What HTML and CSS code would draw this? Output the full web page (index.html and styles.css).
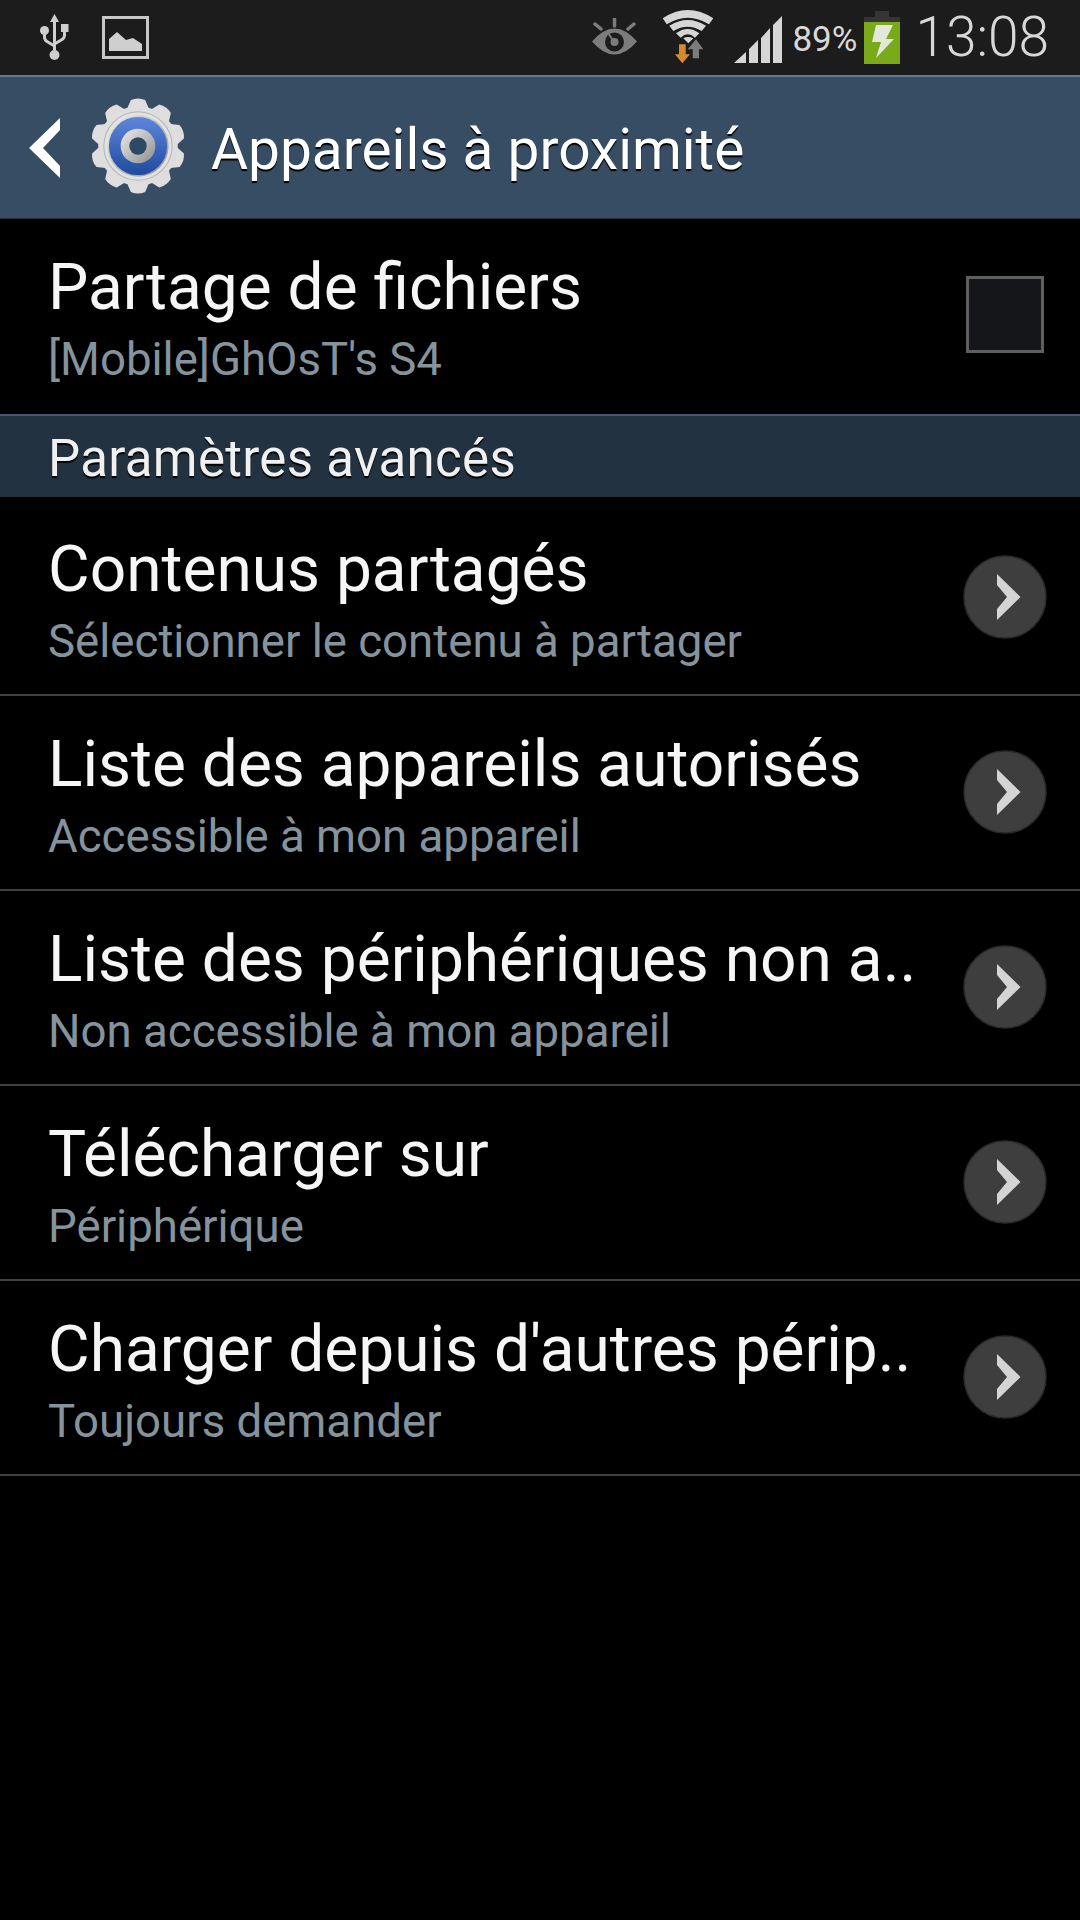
FILE: index.html
```html
<!DOCTYPE html>
<html lang="fr">
<head>
  <meta charset="UTF-8" />
  <meta name="viewport" content="width=device-width, initial-scale=1.0" />
  <title>Appareils à proximité</title>
  <link rel="stylesheet" href="styles.css">
</head>
<body>
  <div class="status-bar">
    <div class="status-left">
      <svg class="icon-usb" width="29" height="47" viewBox="0 0 29 47">
        <path d="M14.5 0 L19 8 H16 V36 H13 V8 H10 Z" fill="#cfcfcf"/>
        <circle cx="14.5" cy="41" r="5" fill="#cfcfcf"/>
        <circle cx="4.5" cy="16.5" r="4.5" fill="#cfcfcf"/>
        <rect x="21" y="10" width="7.5" height="8" fill="#cfcfcf"/>
        <path d="M4.5 18 V23 Q4.5 26 7 27.5 L14.5 32" fill="none" stroke="#cfcfcf" stroke-width="3"/>
        <path d="M24.5 17 V21 Q24.5 24 22 25.5 L14.5 30" fill="none" stroke="#cfcfcf" stroke-width="3"/>
      </svg>
      <svg class="icon-image" width="47" height="43" viewBox="0 0 47 43">
        <rect x="1.5" y="1.5" width="44" height="40" fill="none" stroke="#c8c8c8" stroke-width="3"/>
        <path d="M7 35 V23 L15 16 L24 24 L31 22 L40 28 V35 Z" fill="#cfcfcf"/>
      </svg>
    </div>
    <div class="status-right">
      <svg class="icon-eye" width="45" height="37" viewBox="0 0 45 37">
        <path d="M0 23.5 Q22.5 -2.5 45 23.5 Q22.5 49.5 0 23.5 Z" fill="#7c7c7c"/>
        <circle cx="22.5" cy="24" r="9.5" fill="#1c1c1c"/>
        <circle cx="22.5" cy="24" r="4" fill="#7c7c7c"/>
        <path d="M22 24 L16 15" stroke="#7c7c7c" stroke-width="2"/>
        <path d="M22.5 1 V8 M3 6 L9 11 M42 6 L36 11" stroke="#7c7c7c" stroke-width="3.5" stroke-linecap="round"/>
      </svg>
      <svg class="icon-wifi" width="52" height="54" viewBox="0 0 52 54">
        <path d="M0.7 8.3 Q25.7 -8.300 51.300 8.3 L47 14.300 Q25.700 1.100 4.700 14.300 Z" fill="#d6d6d6"/>
        <path d="M7.300 15.700 Q25.700 4.300 44 15.700 L39.700 21 Q25.700 12.400 11.300 21 Z" fill="#d6d6d6"/>
        <path d="M14 23.300 Q25.700 14.700 37.300 23.300 L33 27.700 Q25.700 20.900 18.700 27.700 Z" fill="#d6d6d6"/>
        <path d="M21.300 28.300 Q25.700 25.500 31.300 28.300 L26.300 33.300 Z" fill="#d6d6d6"/>
        <path d="M34 29.300 L41.300 39.300 H37 V48.300 H30.700 V39.300 H25.700 Z" fill="#7c7c7c"/>
        <path d="M17 34.300 H23.700 V44.300 H28 L20.300 53.300 L13 44.300 H17 Z" fill="#d68a2e"/>
      </svg>
      <svg class="icon-signal" width="48" height="47" viewBox="0 0 48 47">
        <path d="M0 47 L12 36 V47 Z M15 33 L24 24 V47 H15 Z M27 22 L36 12 V47 H27 Z M39 9 L48 0 V47 H39 Z" fill="#d6d6d6"/>
      </svg>
      <span class="battery-text">89%</span>
      <svg class="icon-battery" width="36" height="53" viewBox="0 0 36 53">
        <rect x="11" y="0" width="14" height="7" fill="#353535"/>
        <rect x="0" y="6" width="36" height="5" fill="#353535"/>
        <rect x="0" y="11" width="36" height="42" fill="#7aa91a"/>
        <path d="M12 14 H29 L22 28 H30 L12 47 L17 31 H8 Z" fill="#e4e8d8"/>
      </svg>
      <span class="clock">13:08</span>
    </div>
  </div>

  <div class="action-bar">
    <svg class="back-arrow" width="31" height="60" viewBox="0 0 31 60">
      <path d="M31 0 V12 L14 30 L31 48 V60 L0 30 Z" fill="#fff"/>
    </svg>
    <svg class="gear" width="96" height="96" viewBox="0 0 94 94">
      <defs>
        <linearGradient id="blue" x1="0" y1="0" x2="0" y2="1">
          <stop offset="0" stop-color="#5f86dc"/>
          <stop offset="1" stop-color="#1f4a9e"/>
        </linearGradient>
        <linearGradient id="silver" x1="0" y1="0" x2="1" y2="1">
          <stop offset="0" stop-color="#ececec"/>
          <stop offset="1" stop-color="#8e8e8e"/>
        </linearGradient>
        <path id="tooth" d="M36.500 10 L40 2 Q47 -1 54 2 L57.500 10 Z" fill="#dedede"/>
      </defs>
      <use href="#tooth"/>
      <use href="#tooth" transform="rotate(36 47 47)"/>
      <use href="#tooth" transform="rotate(72 47 47)"/>
      <use href="#tooth" transform="rotate(108 47 47)"/>
      <use href="#tooth" transform="rotate(144 47 47)"/>
      <use href="#tooth" transform="rotate(180 47 47)"/>
      <use href="#tooth" transform="rotate(216 47 47)"/>
      <use href="#tooth" transform="rotate(252 47 47)"/>
      <use href="#tooth" transform="rotate(288 47 47)"/>
      <use href="#tooth" transform="rotate(324 47 47)"/>
      <circle cx="47" cy="47" r="39" fill="#dedede"/>
      <circle cx="47" cy="47" r="34" fill="#b4b4b4"/>
      <circle cx="47" cy="47" r="33" fill="#e2e2e2"/>
      <circle cx="47" cy="47" r="30" fill="url(#silver)"/>
      <circle cx="47" cy="47" r="28.500" fill="url(#blue)"/>
      <circle cx="47" cy="47" r="17" fill="url(#silver)"/>
      <circle cx="47" cy="47" r="8.500" fill="#2e4a63"/>
    </svg>
    <h1 class="screen-title">Appareils à proximité</h1>
  </div>

  <div class="list">
    <div class="row row-toggle">
      <div class="row-text">
        <div class="row-title">Partage de fichiers</div>
        <div class="row-sub">[Mobile]GhOsT's S4</div>
      </div>
      <div class="checkbox"></div>
    </div>
    <div class="section-header">Paramètres avancés</div>
    <div class="row">
      <div class="row-text">
        <div class="row-title">Contenus partagés</div>
        <div class="row-sub">Sélectionner le contenu à partager</div>
      </div>
      <svg class="go" width="84" height="84" viewBox="0 0 84 84"><use href="#go-btn"/></svg>
    </div>
    <div class="row">
      <div class="row-text">
        <div class="row-title">Liste des appareils autorisés</div>
        <div class="row-sub">Accessible à mon appareil</div>
      </div>
      <svg class="go" width="84" height="84" viewBox="0 0 84 84"><use href="#go-btn"/></svg>
    </div>
    <div class="row">
      <div class="row-text">
        <div class="row-title">Liste des périphériques non a..</div>
        <div class="row-sub">Non accessible à mon appareil</div>
      </div>
      <svg class="go" width="84" height="84" viewBox="0 0 84 84"><use href="#go-btn"/></svg>
    </div>
    <div class="row">
      <div class="row-text">
        <div class="row-title">Télécharger sur</div>
        <div class="row-sub">Périphérique</div>
      </div>
      <svg class="go" width="84" height="84" viewBox="0 0 84 84"><use href="#go-btn"/></svg>
    </div>
    <div class="row">
      <div class="row-text">
        <div class="row-title">Charger depuis d'autres périp..</div>
        <div class="row-sub">Toujours demander</div>
      </div>
      <svg class="go" width="84" height="84" viewBox="0 0 84 84"><use href="#go-btn"/></svg>
    </div>
  </div>

  <svg class="sprites" width="0" height="0">
    <g id="go-btn">
      <circle cx="42" cy="42" r="41" fill="#3e3e3e" stroke="#2a2a2a" stroke-width="1.500"/>
      <path d="M34 19 L57.500 42 L34 65 V54 L44 42 L34 30 Z" fill="#d4d4d4"/>
    </g>
  </svg>
</body>
</html>
```

FILE: styles.css
```css
body {
  font-family: Roboto, "Liberation Sans", sans-serif;
  background: #000;
  color: #fff;
  margin: 0;
  padding: 0;
}
.status-bar {
  height: 75px;
  background: #1c1c1c;
  display: flex;
  justify-content: space-between;
  align-items: flex-start;
}
.status-left {
  display: flex;
  align-items: flex-start;
  padding-left: 40px;
}
.icon-usb {
  margin-top: 14px;
}
.icon-image {
  margin: 16px 0 0 33px;
}
.status-right {
  display: flex;
  align-items: flex-start;
  padding-right: 31px;
}
.icon-eye {
  margin-top: 18px;
}
.icon-wifi {
  margin: 10px 0 0 25px;
}
.icon-signal {
  margin: 16px 0 0 20px;
}
.battery-text {
  font-size: 35px;
  line-height: 40px;
  margin: 20px 0 0 10px;
  color: #d8d8d8;
}
.icon-battery {
  margin: 11px 0 0 7px;
}
.clock {
  font-size: 55px;
  font-weight: 300;
  line-height: 64px;
  margin: 5px 0 0 15px;
  color: #d8d8d8;
}
.action-bar {
  height: 141px;
  background: #364d63;
  border-top: 2px solid #5d7a94;
  border-bottom: 1px solid #22303e;
  display: flex;
  align-items: center;
  padding-left: 29px;
}
.gear {
  margin: 0 0 3px 30px;
  flex: none;
}
.screen-title {
  margin: 4px 0 0 25px;
  font-size: 56.8px;
  font-weight: 400;
  text-shadow: 0 2px 1px #000;
}
.row {
  height: 193px;
  border-bottom: 2px solid #404040;
  display: flex;
  align-items: center;
  justify-content: space-between;
  padding: 0 33px 0 48px;
}
.row-toggle {
  height: 195px;
  border-bottom: none;
}
.row-text {
  padding-top: 8px;
}
.row-toggle .row-text {
  padding-top: 6px;
}
.row-title {
  font-size: 64px;
  line-height: 72px;
  color: #f6f6f6;
  white-space: nowrap;
}
.row-sub {
  font-size: 45.6px;
  line-height: 54px;
  color: #85939c;
  margin-top: 9px;
  white-space: nowrap;
}
.checkbox {
  width: 72px;
  height: 71px;
  margin: 0 3px 5px 0;
  background: #14161a;
  border: 3px solid #5f5f5f;
}
.section-header {
  height: 78px;
  line-height: 79px;
  padding: 3px 0 0 48px;
  margin-bottom: 4px;
  background: #223240;
  border-top: 2px solid #46586a;
  font-size: 51px;
  letter-spacing: 0.3px;
  color: #f0f0f0;
  text-shadow: 0 2px 1px #000;
}
.go {
  flex: none;
  margin-bottom: 2px;
}
.sprites {
  position: absolute;
}
```
